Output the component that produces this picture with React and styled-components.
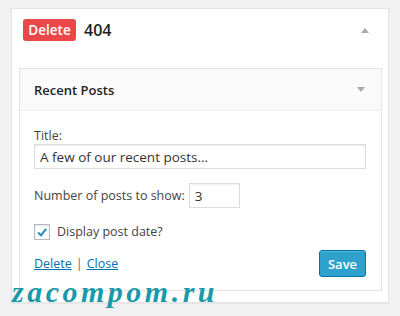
import React, { useState } from "react";
import styled, { createGlobalStyle } from "styled-components";

const GlobalStyle = createGlobalStyle`
  html, body {
    margin: 0;
    background: #f1f1f1;
    font-family: "Open Sans", "Liberation Sans", sans-serif;
    color: #444;
  }
`;

const Page = styled.div`
  position: relative;
  padding: 8px 0 0 11px;
  width: 378px;
  min-height: 308px;
`;

const Card = styled.div`
  background: #fff;
  border: 1px solid #e5e5e5;
  box-shadow: 0 1px 1px rgba(0, 0, 0, 0.04);
  padding: 10px 6px 11px 7px;
`;

const TopRow = styled.div`
  display: flex;
  align-items: center;
  padding-left: 4px;
  height: 22px;
  margin-bottom: 27px;
`;

const Badge = styled.span`
  display: inline-flex;
  align-items: center;
  justify-content: center;
  width: 53px;
  height: 22px;
  background: #e9474a;
  color: #fff;
  border-radius: 3px;
  font-size: 13.5px;
  font-weight: 600;
`;

const Heading = styled.span`
  margin-left: 8px;
  font-size: 16px;
  font-weight: 600;
  color: #222;
`;

const Arrow = styled.span`
  margin-left: auto;
  margin-right: ${(p) => p.$right}px;
  width: 0;
  height: 0;
  border-left: 4px solid transparent;
  border-right: 4px solid transparent;
  ${(p) =>
    p.$up
      ? "border-bottom: 5px solid #aaa;"
      : "border-top: 5px solid #aaa;"}
`;

const Panel = styled.div`
  border: 1px solid #e5e5e5;
  background: #fff;
`;

const PanelHead = styled.div`
  display: flex;
  align-items: center;
  height: 41px;
  padding-left: 14px;
  background: #fafafa;
  border-bottom: 1px solid #eee;
  font-size: 13px;
  font-weight: 600;
  color: #222;
`;

const PanelBody = styled.div`
  padding: 16px 15px 13px 14px;
  font-size: 12.5px;
  color: #444;
`;

const Label = styled.div`
  line-height: 17px;
`;

const TextInput = styled.input`
  display: block;
  box-sizing: border-box;
  width: 332px;
  height: 25px;
  border: 1px solid #ddd;
  box-shadow: inset 0 1px 2px rgba(0, 0, 0, 0.07);
  padding: 0 5px;
  font-family: inherit;
  font-size: 13.5px;
  color: #333;
  outline: none;
`;

const NumberRow = styled.div`
  display: flex;
  align-items: center;
  gap: 4px;
  margin-top: 14px;
`;

const SmallInput = styled(TextInput)`
  width: 51px;
`;

const CheckRow = styled.label`
  display: flex;
  align-items: center;
  gap: 7px;
  margin-top: 15px;
`;

const Box = styled.span`
  display: inline-flex;
  align-items: center;
  justify-content: center;
  box-sizing: border-box;
  width: 16px;
  height: 16px;
  border: 1px solid #b4b9be;
  box-shadow: inset 0 1px 2px rgba(0, 0, 0, 0.1);
  background: #fff;
`;

const Footer = styled.div`
  display: flex;
  align-items: center;
  margin-top: 10px;
`;

const Link = styled.a`
  color: #0073aa;
  text-decoration: underline;
  cursor: pointer;
`;

const Sep = styled.span`
  margin: 0 4px;
  color: #666;
`;

const SaveButton = styled.button`
  margin-left: auto;
  width: 47px;
  height: 27px;
  background: #2ea2cc;
  border: 1px solid #0074a2;
  border-radius: 3px;
  box-shadow: inset 0 1px 0 rgba(120, 200, 230, 0.5);
  color: #fff;
  font-family: inherit;
  font-size: 13px;
  font-weight: 600;
  padding: 0;
`;

const Watermark = styled.div`
  position: absolute;
  z-index: 10;
  left: 12px;
  top: 275px;
  font-family: "Liberation Serif", "DejaVu Serif", serif;
  font-style: italic;
  font-weight: 700;
  font-size: 30px;
  line-height: 34px;
  letter-spacing: 3.5px;
  color: #1a9aa9;
`;

export default function App() {
  const [title, setTitle] = useState("A few of our recent posts...");
  const [count, setCount] = useState("3");
  return (
    <Page>
      <GlobalStyle />
      <Card>
        <TopRow>
          <Badge>Delete</Badge>
          <Heading>404</Heading>
          <Arrow $up $right={13} />
        </TopRow>
        <Panel>
          <PanelHead>
            Recent Posts
            <Arrow $right={16} />
          </PanelHead>
          <PanelBody>
            <Label>Title:</Label>
            <TextInput value={title} onChange={(e) => setTitle(e.target.value)} />
            <NumberRow>
              <span>Number of posts to show:</span>
              <SmallInput value={count} onChange={(e) => setCount(e.target.value)} />
            </NumberRow>
            <CheckRow>
              <Box>
                <svg width="12" height="12" viewBox="0 0 12 12">
                  <path d="M2 6.5 L5 9.2 L10.2 2.8" fill="none" stroke="#1e8cbe" strokeWidth="2" />
                </svg>
              </Box>
              Display post date?
            </CheckRow>
            <Footer>
              <Link>Delete</Link>
              <Sep>|</Sep>
              <Link>Close</Link>
              <SaveButton>Save</SaveButton>
            </Footer>
          </PanelBody>
        </Panel>
      </Card>
      <Watermark>zacompom.ru</Watermark>
    </Page>
  );
}
